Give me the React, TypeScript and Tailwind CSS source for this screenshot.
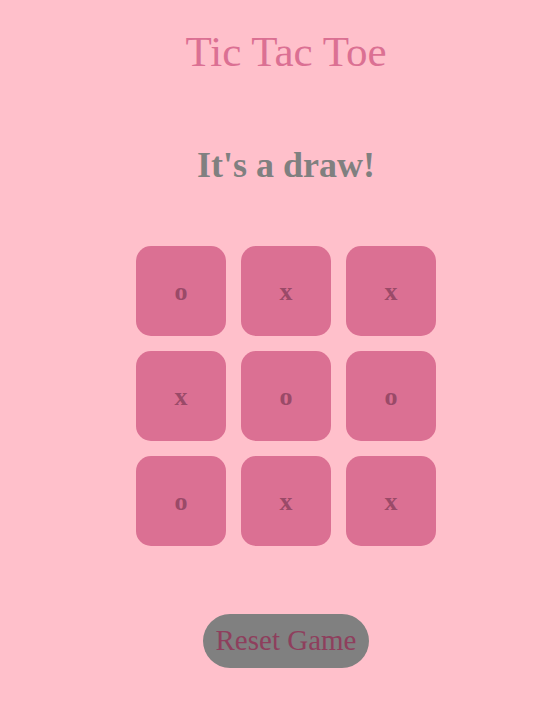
import React from 'react';

const board = ['o', 'x', 'x', 'x', 'o', 'o', 'o', 'x', 'x'];

const App: React.FC = () => {
  return (
    <div className="min-h-[721px] bg-[#ffc0cb] pl-[14px] flex flex-col items-center font-['Liberation_Serif',serif]">
      <h1 className="mt-[27px] text-[43px] leading-[50px] text-[#db7093]">Tic Tac Toe</h1>
      <h2 className="mt-[66px] text-[36px] leading-[44px] font-bold text-[#808080]">It's a draw!</h2>
      <div className="mt-[59px] grid grid-cols-3 gap-[15px]">
        {board.map((cell, i) => (
          <button
            key={i}
            className="w-[90px] h-[90px] rounded-[15px] bg-[#db7093] text-[26px] font-bold text-[#9a4a68] flex items-center justify-center"
          >
            {cell}
          </button>
        ))}
      </div>
      <button className="mt-[68px] w-[166px] h-[54px] rounded-full bg-[#808080] text-[29px] text-[#8e3f5d]">
        Reset Game
      </button>
    </div>
  );
};

export default App;
